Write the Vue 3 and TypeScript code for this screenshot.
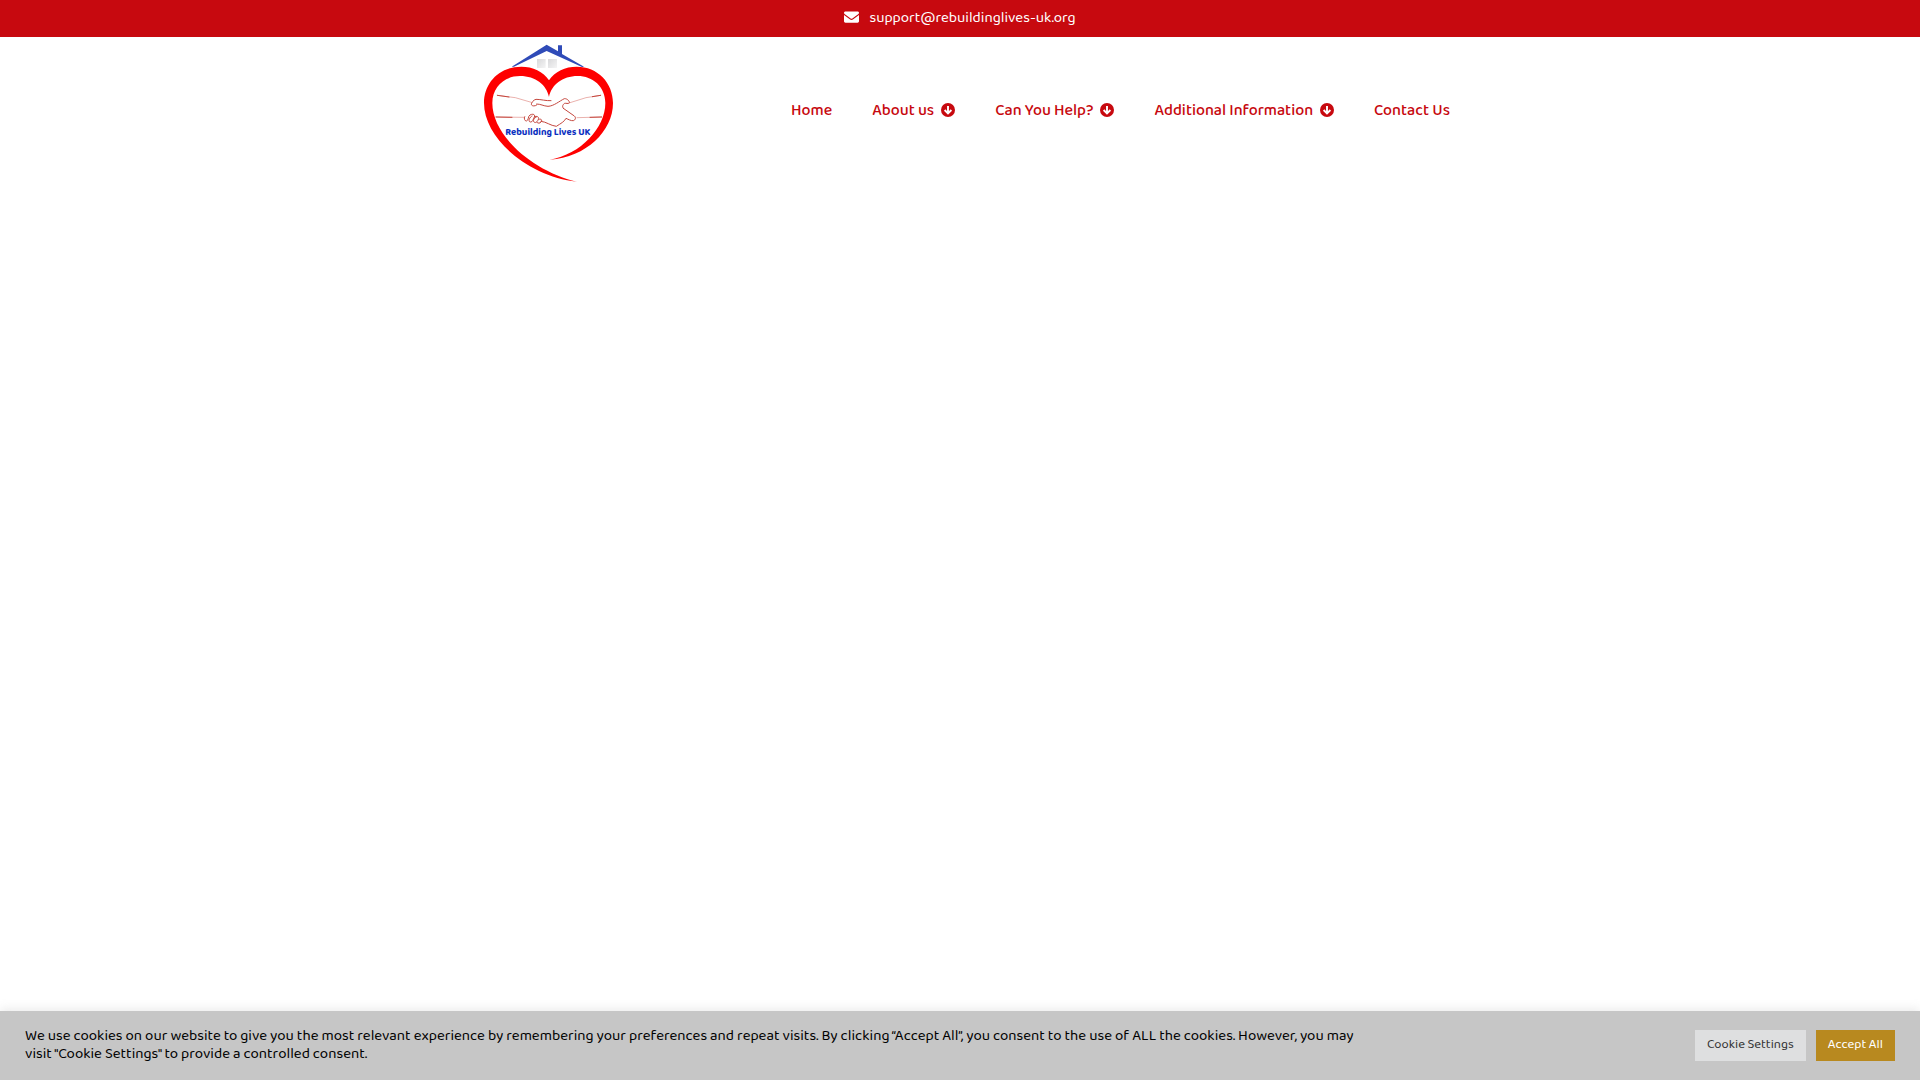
<script setup lang="ts">
interface NavItem {
  label: string
  hasMenu: boolean
}

const email: string = 'support@rebuildinglives-uk.org'

const navItems: NavItem[] = [
  { label: 'Home', hasMenu: false },
  { label: 'About us', hasMenu: true },
  { label: 'Can You Help?', hasMenu: true },
  { label: 'Additional Information', hasMenu: true },
  { label: 'Contact Us', hasMenu: false },
]
</script>

<template>
  <div class="page">
    <div class="topbar">
      <a class="mail" :href="'mailto:' + email">
        <svg class="mail-icon" viewBox="0 0 512 384" aria-hidden="true">
          <path
            d="M48 0h416c26 0 48 22 48 48 0 16-8 30-20 40L285 243c-17 13-41 13-58 0L20 88C8 78 0 64 0 48 0 22 22 0 48 0z"
          />
          <path d="M0 120l208 156c28 21 68 21 96 0l208-156v216c0 26-22 48-48 48H48c-26 0-48-22-48-48z" />
        </svg>
        <span>{{ email }}</span>
      </a>
    </div>

    <header class="header">
      <a class="logo" href="#" aria-label="Rebuilding Lives UK home">
        <svg viewBox="0 21 480 459">
          <defs>
            <linearGradient id="pane" x1="0" y1="0" x2="1" y2="1">
              <stop offset="0" stop-color="#d8d8da" />
              <stop offset="1" stop-color="#f5f5f5" />
            </linearGradient>
          </defs>
          <path fill="#2f4bb8" d="M125 110L230 44l34 20V46h12v26l66 38-6 1-106-48-98 47z" />
          <path fill="url(#pane)" d="M201 87h26v27h-26z" />
          <path fill="url(#pane)" d="M234 87h27v27h-27z" />
          <path
            fill="#fe0000"
            d="M237 151C220 124 188 110 154 110C88 110 42 158 42 219C42 325 174 440 321 455C190 424 67 318 67 219C67 170 104 138 150 138C197 138 230 165 237 201C244 165 277 138 323 138C368 138 406 170 406 219C406 293 333 373 239 389C349 382 429 303 429 219C429 158 383 110 320 110C286 110 254 124 237 151Z"
          />
          <g fill="none" stroke-linecap="round" stroke-linejoin="round">
            <g stroke="#e08a84" stroke-width="2">
              <path d="M82 196l54 7 48 14" />
              <path d="M392 196l-44 7-48 15" />
              <path d="M78 261l84 1" />
              <path d="M395 261l-74 2" />
            </g>
            <g stroke="#c5473e" stroke-width="3">
              <path d="M82 196l35 5M78 261l48 1M392 196l-25 4M395 261l-35 1" />
              <path d="M200 225c-5 4-13 4-16-1-1-5 7-15 14-16 16 0 29 5 45 4" />
              <path d="M200 222c12 0 20 6 34 7 18-1 33-15 49-23 9-1 17 9 15 13-4 3-10 0-14 1-5 3-9 9-4 15" />
              <path d="M280 235l33 23c6 5 3 12-3 14-7 1-15-4-22-7-5 10-15 15-29 24-18-2-30-14-46-15" />
              <path d="M164 260c-3 5 0 13 5 13 8-1 4-15 11-18 9-5 17-1 13 6-4 8-5 15-11 15-9 0-4-15 4-18" />
              <path d="M193 261c8-5 15 0 12 7-3 8-8 12-13 8-5-5 2-13 7-15M206 268c8-3 12 3 7 8-3 4-9 5-12 1" />
            </g>
          </g>
          <text x="106" y="314" class="logo-text">Rebuilding Lives UK</text>
        </svg>
      </a>

      <nav class="nav" aria-label="Main">
        <a v-for="item in navItems" :key="item.label" class="nav-link" href="#">
          <span class="nav-label">{{ item.label }}</span>
          <svg v-if="item.hasMenu" class="nav-icon" viewBox="0 0 14 14" aria-hidden="true">
            <circle cx="7" cy="7" r="7" fill="#c7090f" />
            <path
              d="M7 3v7M3.6 7L7 10.4 10.4 7"
              fill="none"
              stroke="#fff"
              stroke-width="1.9"
            />
          </svg>
        </a>
      </nav>
    </header>

    <section class="cookies" aria-label="Cookie consent">
      <p class="cookie-text">
        We use cookies on our website to give you the most relevant experience by remembering your preferences and
        repeat visits. By clicking “Accept All”, you consent to the use of ALL the cookies. However, you may
        visit "Cookie Settings" to provide a controlled consent.
      </p>
      <div class="actions">
        <button type="button" class="btn settings">Cookie Settings</button>
        <button type="button" class="btn accept">Accept All</button>
      </div>
    </section>
  </div>
</template>

<style>
body {
  margin: 0;
  background: #fff;
}
</style>

<style scoped>
.page {
  min-height: 100vh;
  display: flex;
  flex-direction: column;
  font-family: 'Baloo 2', 'Noto Sans', sans-serif;
}

.topbar {
  display: flex;
  justify-content: center;
  padding: 8px 0 9px;
  background: #c7090f;
}

.mail {
  display: flex;
  align-items: center;
  gap: 10px;
  color: #fff;
  font-size: 15px;
  line-height: 20px;
  text-decoration: none;
}

.mail-icon {
  width: 15px;
  height: 12px;
  padding-bottom: 2px;
  fill: #fff;
}

.header {
  width: 100%;
  max-width: 980px;
  margin: 0 auto;
  display: flex;
  align-items: center;
  justify-content: space-between;
}

.logo svg {
  display: block;
  width: 160px;
  height: 153px;
}

.logo-text {
  font-size: 29px;
  font-weight: 700;
  fill: #0a2fc0;
}

.nav {
  display: flex;
  gap: 40px;
  padding-bottom: 8px;
}

.nav-link {
  display: flex;
  align-items: center;
  gap: 7px;
  color: #c7090f;
  font-size: 16px;
  font-weight: 500;
  line-height: 24px;
  text-decoration: none;
  white-space: nowrap;
}

.nav-label {
  padding-top: 2px;
}

.nav-icon {
  width: 14px;
  height: 14px;
}

.cookies {
  position: sticky;
  bottom: 0;
  margin-top: auto;
  display: flex;
  align-items: center;
  justify-content: space-between;
  padding: 16px 25px 17px;
  background: #c6c6c6;
  box-shadow: 0 -1px 10px rgba(172, 171, 171, 0.3);
}

.cookie-text {
  flex: 0 1 1330px;
  margin: 0;
  color: #000;
  font-size: 15px;
  line-height: 18px;
}

.actions {
  display: flex;
  gap: 10px;
}

.btn {
  padding: 6px 12px 8px;
  border: 0;
  font-family: inherit;
  font-size: 13px;
  line-height: 17px;
  white-space: nowrap;
  cursor: pointer;
}

.settings {
  background: #dedfe0;
  color: #333;
}

.accept {
  background: #b8891f;
  color: #fff;
}
</style>
